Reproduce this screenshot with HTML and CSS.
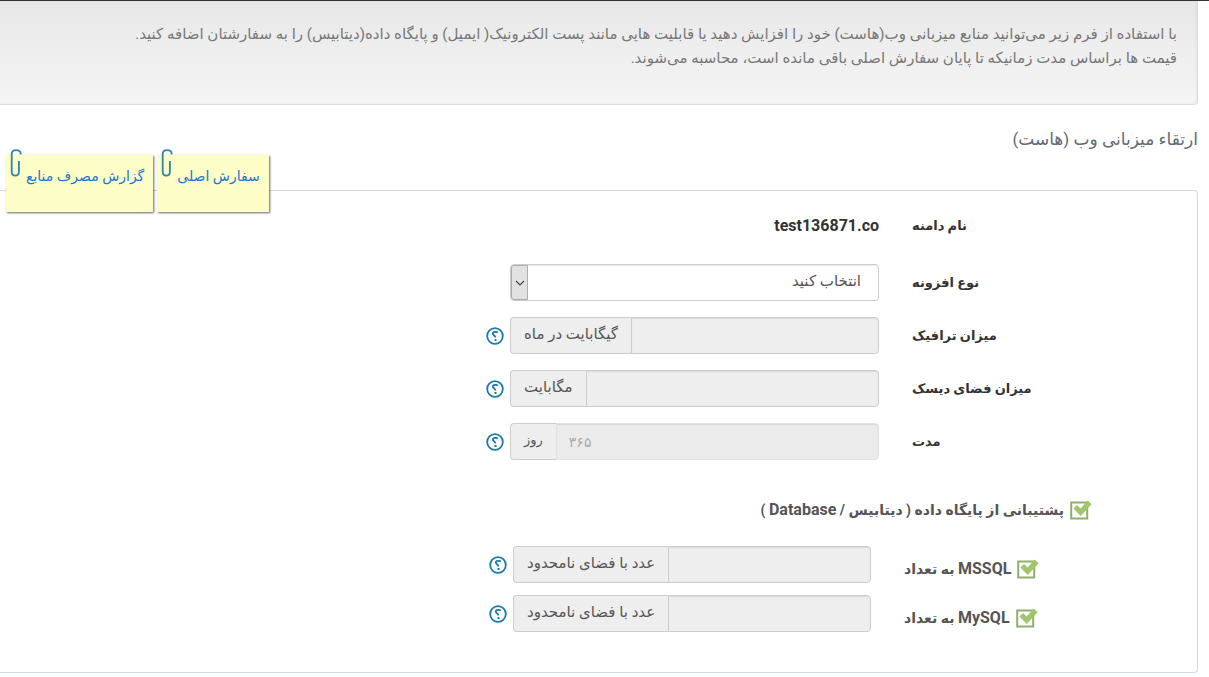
FILE: index.html
```html
<!DOCTYPE html>
<html lang="fa" dir="rtl">
<head>
<meta charset="utf-8">
<title>ارتقاء میزبانی وب (هاست)</title>
<link rel="stylesheet" href="styles.css">
</head>
<body>
<svg class="sprite" aria-hidden="true">
  <symbol id="help" viewBox="0 0 18 18">
    <circle cx="9" cy="9" r="7.8" fill="#fff" stroke="#1b79ab" stroke-width="1.8"/>
    <path d="M11.8 5.6C10.8 4.5 6.8 4.4 6.8 6.6c0 1.8 2.6 1.7 2.6 4" fill="none" stroke="#1b79ab" stroke-width="1.8"/>
    <rect x="8.5" y="12" width="2" height="2" fill="#1b79ab"/>
  </symbol>
  <symbol id="check" viewBox="0 0 22 20">
    <path d="M1.2 2.4h16v16h-16z" fill="#fff" stroke="#8fb06c" stroke-width="2"/>
    <path d="M3.4 8.6l3.6-3.6 3.6 3.4L17.6.6l4 3.6L10.8 16z" fill="#a0c56a"/>
  </symbol>
  <symbol id="clip" viewBox="0 0 12 28">
    <path d="M10.6 5.5V4.2C10.6 2.3 8.8 1.2 6.2 1.2S1.7 2.5 1.7 5v17.5c0 2.7 1.2 4.1 3.6 4.1s3.6-1.4 3.6-4.1V12" fill="none" stroke="#2f86ab" stroke-width="1.8"/>
  </symbol>
</svg>

<main class="page">
  <section class="intro">
    <p>با استفاده از فرم زیر می‌توانید منابع میزبانی وب(هاست) خود را افزایش دهید یا قابلیت هایی مانند پست الکترونیک( ایمیل) و پایگاه داده(دیتابیس) را به سفارشتان اضافه کنید.</p>
    <p>قیمت ها براساس مدت زمانیکه تا پایان سفارش اصلی باقی مانده است، محاسبه می‌شوند.</p>
  </section>

  <header class="heading">
    <h1>ارتقاء میزبانی وب (هاست)</h1>
    <nav class="notes">
      <a class="note" href="#order"><svg class="clip"><use href="#clip"/></svg>سفارش اصلی</a>
      <a class="note" href="#usage"><svg class="clip"><use href="#clip"/></svg>گزارش مصرف منابع</a>
    </nav>
  </header>

  <form class="panel">
    <div class="row">
      <span class="label">نام دامنه</span>
      <strong class="domain" dir="ltr">test136871.co</strong>
    </div>
    <div class="row">
      <label class="label" for="addon">نوع افزونه</label>
      <div class="select-box">
        <select id="addon"><option>انتخاب کنید</option></select>
        <span class="arrow"><svg viewBox="0 0 10 6"><path d="M1 1l4 4 4-4" fill="none" stroke="#444" stroke-width="1.1"/></svg></span>
      </div>
    </div>
    <div class="row">
      <label class="label" for="traffic">میزان ترافیک</label>
      <div class="group"><input id="traffic" type="text" readonly><span class="unit">گیگابایت در ماه</span></div>
      <button class="help" type="button" aria-label="راهنما"><svg><use href="#help"/></svg></button>
    </div>
    <div class="row">
      <label class="label" for="disk">میزان فضای دیسک</label>
      <div class="group"><input id="disk" type="text" readonly><span class="unit">مگابایت</span></div>
      <button class="help" type="button" aria-label="راهنما"><svg><use href="#help"/></svg></button>
    </div>
    <div class="row">
      <label class="label" for="days">مدت</label>
      <div class="group faded"><input id="days" type="text" value="۳۶۵" disabled><span class="unit">روز</span></div>
      <button class="help" type="button" aria-label="راهنما"><svg><use href="#help"/></svg></button>
    </div>

    <div class="database">
      <label class="tick"><span class="box"><input type="checkbox" checked><svg><use href="#check"/></svg></span><span>پشتیبانی از پایگاه داده ( دیتابیس / <bdi>Database</bdi> )</span></label>
    </div>
    <div class="row inner">
      <label class="tick label"><span class="box"><input type="checkbox" checked><svg><use href="#check"/></svg></span><span><bdi>MSSQL</bdi> به تعداد</span></label>
      <div class="group"><input type="text" aria-label="MSSQL" readonly><span class="unit">عدد با فضای نامحدود</span></div>
      <button class="help" type="button" aria-label="راهنما"><svg><use href="#help"/></svg></button>
    </div>
    <div class="row inner">
      <label class="tick label"><span class="box"><input type="checkbox" checked><svg><use href="#check"/></svg></span><span><bdi>MySQL</bdi> به تعداد</span></label>
      <div class="group"><input type="text" aria-label="MySQL" readonly><span class="unit">عدد با فضای نامحدود</span></div>
      <button class="help" type="button" aria-label="راهنما"><svg><use href="#help"/></svg></button>
    </div>
  </form>
</main>
</body>
</html>
```
FILE: styles.css
```css
* { box-sizing: border-box; }

body {
  margin: 0;
  border-top: 1px solid #333;
  background: #fff;
  color: #555;
  font: 15px/24px Roboto, "DejaVu Sans", sans-serif;
}

.sprite { position: absolute; width: 0; height: 0; }
svg { display: block; }
input, select, button { font: inherit; color: inherit; }

.page { margin-right: 11px; }

.intro {
  padding: 21px 20px 34px;
  border: 1px solid #dcdcdc;
  border-width: 0 1px 1px 0;
  border-radius: 0 0 4px 0;
  background: linear-gradient(#e8e8e8, #f5f5f5);
  box-shadow: inset -1px 0 3px rgba(0, 0, 0, .05);
  color: #777;
}
.intro p { margin: 0; }

.heading { position: relative; padding: 22px 0 39px; }
.heading h1 {
  margin: 0;
  color: #5f6b76;
  font-size: 17px;
  font-weight: 400;
  line-height: 24px;
}

.notes {
  position: absolute;
  left: 6px;
  top: 50px;
  display: flex;
  gap: 4px;
}
.note {
  position: relative;
  height: 57px;
  padding: 9px 9px 0 20px;
  background: #fdfdc8;
  box-shadow: 1px 1px 2px rgba(0, 0, 0, .6);
  color: #1b75d0;
  font-size: 14px;
  text-decoration: none;
  white-space: nowrap;
}
.clip { position: absolute; left: 4px; top: -6px; width: 12px; height: 28px; }

.panel {
  padding: 16px 0 40px;
  border: 1px solid #cbdbe8;
  border-left: 0;
  border-radius: 0 4px 4px 0;
}

.row {
  display: grid;
  grid-template-columns: 285fr 33px 369fr 510fr;
  align-items: center;
  min-height: 37px;
  margin-bottom: 16px;
}
.row > :nth-child(2) { grid-column: 3; }
.row:first-child { margin-bottom: 20px; }
.label {
  color: #333;
  font-size: 13px;
  font-weight: 700;
  text-align: left;
}
.domain { color: #333; font-size: 16px; text-align: right; }

.group { display: flex; height: 37px; }
.group input {
  flex: 1;
  width: 0;
  min-width: 0;
  padding: 0 12px;
  border: 1px solid #ccc;
  border-radius: 0 4px 4px 0;
  background: #eee;
  box-shadow: inset 0 1px 1px rgba(0, 0, 0, .08);
}
.unit {
  padding: 4px 13px 0;
  border: 1px solid #ccc;
  border-right: 0;
  border-radius: 4px 0 0 4px;
  background: #eee;
  white-space: nowrap;
}
.group.faded input {
  border-color: #e2e2e2;
  background: #ebebeb;
  color: #aaa;
  font-size: 14px;
  text-align: left;
}
.faded .unit { font-size: 13px; }

.select-box { position: relative; height: 37px; }
.select-box select {
  width: 100%;
  height: 100%;
  padding: 0 17px 4px 20px;
  border: 1px solid #ccc;
  border-radius: 4px;
  appearance: none;
  background: #fff;
  box-shadow: inset 0 1px 1px rgba(0, 0, 0, .08);
}
.arrow {
  position: absolute;
  inset: 1px auto 1px 1px;
  display: grid;
  place-items: center;
  width: 17px;
  border: 1px solid #adadad;
  border-radius: 3px 0 0 3px;
  background: #e1e1e1;
  pointer-events: none;
}
.arrow svg { width: 10px; height: 6px; }

.help {
  width: 18px;
  height: 18px;
  margin-right: 6px;
  padding: 0;
  border: 0;
  background: none;
}
.help svg { width: 18px; height: 18px; }

.tick {
  display: inline-flex;
  align-items: center;
  gap: 6px;
  color: #555;
  font-size: 14px;
  font-weight: 700;
}
.tick bdi { font-size: 16px; }
.box { position: relative; width: 22px; height: 20px; }
.box input { width: 22px; height: 20px; margin: 0; opacity: 0; }
.box svg { position: absolute; inset: 0; width: 22px; height: 20px; }

.database { display: flex; margin: 38px 105px 24px 0; }
.inner { grid-template-columns: 293fr 33px 358fr 513fr; margin-bottom: 12px; }
.inner .label { justify-self: end; padding-top: 8px; }
.inner:last-child { margin-bottom: 0; }
```
